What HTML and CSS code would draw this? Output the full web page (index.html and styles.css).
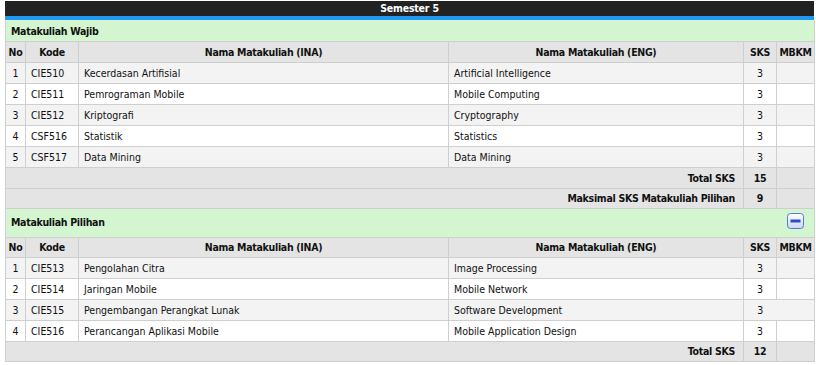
FILE: index.html
```html
<!DOCTYPE html>
<html lang="id">
<head>
<meta charset="utf-8">
<title>Semester 5</title>
<link rel="stylesheet" href="styles.css">
</head>
<body>
<div class="semester">
  <div class="semester-title">Semester 5</div>
  <table class="courses">
    <colgroup>
      <col class="c-no"><col class="c-code"><col class="c-ina"><col class="c-eng"><col class="c-sks"><col class="c-mbkm">
    </colgroup>
    <tbody>
      <tr class="group first"><td colspan="6">Matakuliah Wajib</td></tr>
      <tr class="head"><th>No</th><th>Kode</th><th>Nama Matakuliah (INA)</th><th>Nama Matakuliah (ENG)</th><th>SKS</th><th>MBKM</th></tr>
      <tr class="odd"><td class="num">1</td><td>CIE510</td><td>Kecerdasan Artifisial</td><td>Artificial Intelligence</td><td class="num">3</td><td></td></tr>
      <tr><td class="num">2</td><td>CIE511</td><td>Pemrograman Mobile</td><td>Mobile Computing</td><td class="num">3</td><td></td></tr>
      <tr class="odd"><td class="num">3</td><td>CIE512</td><td>Kriptografi</td><td>Cryptography</td><td class="num">3</td><td></td></tr>
      <tr><td class="num">4</td><td>CSF516</td><td>Statistik</td><td>Statistics</td><td class="num">3</td><td></td></tr>
      <tr class="odd"><td class="num">5</td><td>CSF517</td><td>Data Mining</td><td>Data Mining</td><td class="num">3</td><td></td></tr>
      <tr class="sum"><td colspan="4" class="label">Total SKS</td><td class="num">15</td><td></td></tr>
      <tr class="sum slim"><td colspan="4" class="label">Maksimal SKS Matakuliah Pilihan</td><td class="num">9</td><td></td></tr>
      <tr class="group tall">
        <td colspan="5" class="group-name">Matakuliah Pilihan</td>
        <td class="toggle">
          <svg width="17" height="16" viewBox="0 0 17 16" aria-label="Tutup">
            <defs>
              <linearGradient id="btn" x1="0" y1="0" x2="0" y2="1">
                <stop offset="0" stop-color="#ffffff"/>
                <stop offset="1" stop-color="#c9d6f5"/>
              </linearGradient>
            </defs>
            <rect x="0.5" y="0.5" width="16" height="15" rx="3" fill="url(#btn)" stroke="#5b78d6"/>
            <rect x="3.5" y="6.5" width="10" height="3" fill="#2d4fb4"/>
          </svg>
        </td>
      </tr>
      <tr class="head slim"><th>No</th><th>Kode</th><th>Nama Matakuliah (INA)</th><th>Nama Matakuliah (ENG)</th><th>SKS</th><th>MBKM</th></tr>
      <tr class="odd"><td class="num">1</td><td>CIE513</td><td>Pengolahan Citra</td><td>Image Processing</td><td class="num">3</td><td></td></tr>
      <tr><td class="num">2</td><td>CIE514</td><td>Jaringan Mobile</td><td>Mobile Network</td><td class="num">3</td><td></td></tr>
      <tr class="odd"><td class="num">3</td><td>CIE515</td><td>Pengembangan Perangkat Lunak</td><td>Software Development</td><td class="num open-right">3</td><td></td></tr>
      <tr><td class="num">4</td><td>CIE516</td><td>Perancangan Aplikasi Mobile</td><td>Mobile Application Design</td><td class="num">3</td><td></td></tr>
      <tr class="sum slim"><td colspan="4" class="label">Total SKS</td><td class="num">12</td><td></td></tr>
    </tbody>
  </table>
</div>
</body>
</html>
```
FILE: styles.css
```css
body {
  margin: 0;
  background: #ffffff;
  color: #111111;
  font-family: "DejaVu Sans Condensed", "DejaVu Sans", sans-serif;
  font-size: 10.5px;
}

.semester {
  width: 809px;
  margin: 1px 0 0 5px;
}

.semester-title {
  height: 15px;
  line-height: 15px;
  background: #222222;
  color: #ffffff;
  font-weight: bold;
  letter-spacing: -0.2px;
  text-align: center;
  border-bottom: 4px solid #1e98f0;
}

.courses {
  width: 809px;
  border-collapse: collapse;
  table-layout: fixed;
}

.c-no { width: 20px; }
.c-code { width: 53px; }
.c-ina { width: 370px; }
.c-eng { width: 295px; }
.c-sks { width: 33px; }
.c-mbkm { width: 38px; }

.courses td,
.courses th {
  height: 14px;
  line-height: 14px;
  padding: 3px 5px;
  border: 1px solid #cfcfcf;
  white-space: nowrap;
  overflow: hidden;
  text-align: left;
  background: #ffffff;
}

.courses .slim td,
.courses .slim th {
  height: 13px;
  line-height: 13px;
}

.courses tr.odd td { background: #f3f3f3; }

.courses .head th {
  background: #e4e4e4;
  font-weight: bold;
  letter-spacing: -0.3px;
  text-align: center;
  padding: 3px 2px;
}

.courses .group td {
  background: #d3f5cf;
  font-weight: bold;
  letter-spacing: -0.3px;
  border-top-color: #d3f5cf;
}

.courses .group.tall td {
  height: 21px;
  line-height: 21px;
  padding-top: 3px;
  padding-bottom: 4px;
  border-top-color: #cfcfcf;
}

.courses .group-name { border-right-style: hidden; }

.courses .group.tall .toggle {
  padding: 0 0 4px;
  line-height: 0;
  text-align: center;
}

.courses .toggle svg {
  display: block;
  margin: 0 auto;
}

.courses .num {
  text-align: center;
  padding-left: 2px;
  padding-right: 2px;
}

.courses .sum td {
  background: #e4e4e4;
  font-weight: bold;
  letter-spacing: -0.3px;
}

.courses .sum .label {
  text-align: right;
  padding-right: 8px;
}

.courses .open-right { border-right-style: hidden; }
```
